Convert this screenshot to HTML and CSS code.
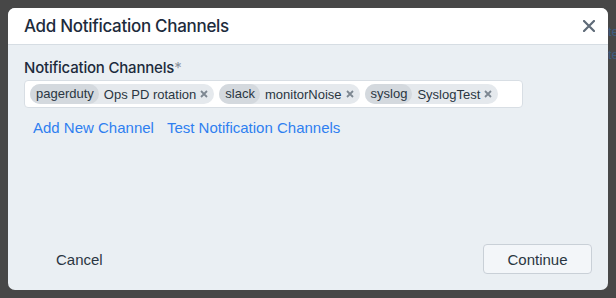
FILE: index.html
```html
<!DOCTYPE html>
<html lang="en">
<head>
    <meta charset="UTF-8">
    <meta name="viewport" content="width=device-width, initial-scale=1.0">
    <title>Add Notification Channels</title>
    <link rel="stylesheet" href="styles.css">
</head>
<body>

<div class="page">
    <div class="modal">
        <div class="modal-header">
            <h1>Add Notification Channels</h1>
            <button class="close" aria-label="Close">
                <svg width="12" height="12" viewBox="0 0 12 12">
                    <path d="M1 1 L11 11 M11 1 L1 11" stroke="#5f6b78" stroke-width="2.2" stroke-linecap="round"/>
                </svg>
            </button>
        </div>

        <div class="modal-body">
            <label class="field-label">Notification Channels<span class="req">*</span></label>
            <div class="chip-input">
                <span class="chip"><span class="chip-type">pagerduty</span>Ops PD rotation<svg class="chip-x" width="8" height="8" viewBox="0 0 8 8"><path d="M1 1 L7 7 M7 1 L1 7"/></svg></span>
                <span class="chip"><span class="chip-type">slack</span>monitorNoise<svg class="chip-x" width="8" height="8" viewBox="0 0 8 8"><path d="M1 1 L7 7 M7 1 L1 7"/></svg></span>
                <span class="chip"><span class="chip-type">syslog</span>SyslogTest<svg class="chip-x" width="8" height="8" viewBox="0 0 8 8"><path d="M1 1 L7 7 M7 1 L1 7"/></svg></span>
            </div>
            <p class="links">
                <a href="#">Add New Channel</a>
                <a href="#">Test Notification Channels</a>
            </p>
        </div>

        <div class="modal-footer">
            <button class="btn-link">Cancel</button>
            <button class="btn">Continue</button>
        </div>
    </div>

    <div class="behind">
        <span>te</span>
        <span>te</span>
    </div>
</div>

</body>
</html>
```

FILE: styles.css
```css
body {
    font-family: "Liberation Sans", Arial, sans-serif;
    background-color: #474747;
    margin: 0;
    padding: 0;
    height: 298px;
    overflow: hidden;
}

.page {
    display: flex;
    padding: 8px 0 0 8px;
}

.modal {
    width: 600px;
    height: 282px;
    flex-shrink: 0;
    background-color: #eaeff3;
    border-radius: 7px;
    display: flex;
    flex-direction: column;
    overflow: hidden;
}

.modal-header {
    background-color: white;
    height: 36px;
    border-bottom: 1px solid #d6dde3;
    display: flex;
    align-items: center;
    justify-content: space-between;
    padding: 0 13px 0 16px;
}

h1 {
    margin: 0;
    font-family: Inter, "Liberation Sans", sans-serif;
    font-size: 17px;
    font-weight: 500;
    letter-spacing: -0.3px;
    color: #1d2b3c;
}

.close {
    background: none;
    border: none;
    padding: 0;
    display: flex;
    cursor: pointer;
}

.modal-body {
    flex: 1;
    padding: 13px 16px 0 16px;
}

.field-label {
    display: block;
    font-family: Inter, "Liberation Sans", sans-serif;
    font-size: 15px;
    font-weight: 500;
    letter-spacing: -0.2px;
    color: #1d2b3c;
    margin-bottom: 3px;
}

.req {
    color: #8a939c;
    font-weight: 400;
}

.chip-input {
    width: 487px;
    height: 26px;
    background-color: white;
    border: 1px solid #d8dee4;
    border-radius: 4px;
    display: flex;
    align-items: center;
    gap: 5px;
    padding: 0 5px;
}

.chip {
    display: flex;
    align-items: center;
    height: 20px;
    background-color: #e5e9ed;
    border-radius: 10px;
    font-size: 13px;
    color: #2a3642;
    padding-right: 6px;
}

.chip-type {
    background-color: #d4d9de;
    border-radius: 10px;
    height: 20px;
    line-height: 20px;
    padding: 0 5px 0 6px;
    margin-right: 5px;
}

.chip-x {
    margin-left: 4px;
    stroke: #7d8791;
    stroke-width: 1.8;
}

.links {
    margin: 11px 0 0 9px;
    display: flex;
    gap: 13px;
}

a {
    color: #2f7ff0;
    text-decoration: none;
    font-size: 15px;
}

.modal-footer {
    display: flex;
    justify-content: space-between;
    align-items: center;
    padding: 0 16px 16px 32px;
}

.btn-link {
    background: none;
    border: none;
    font-family: inherit;
    font-size: 15px;
    color: #2a3642;
    padding: 0 16px;
}

.btn {
    width: 109px;
    height: 30px;
    background-color: #f3f6f9;
    border: 1px solid #c9d0d7;
    border-radius: 4px;
    font-family: inherit;
    font-size: 15px;
    color: #2a3642;
}

.behind {
    display: flex;
    flex-direction: column;
    gap: 8px;
    padding-top: 16px;
    font-size: 13px;
    color: #3d5b80;
}
```
